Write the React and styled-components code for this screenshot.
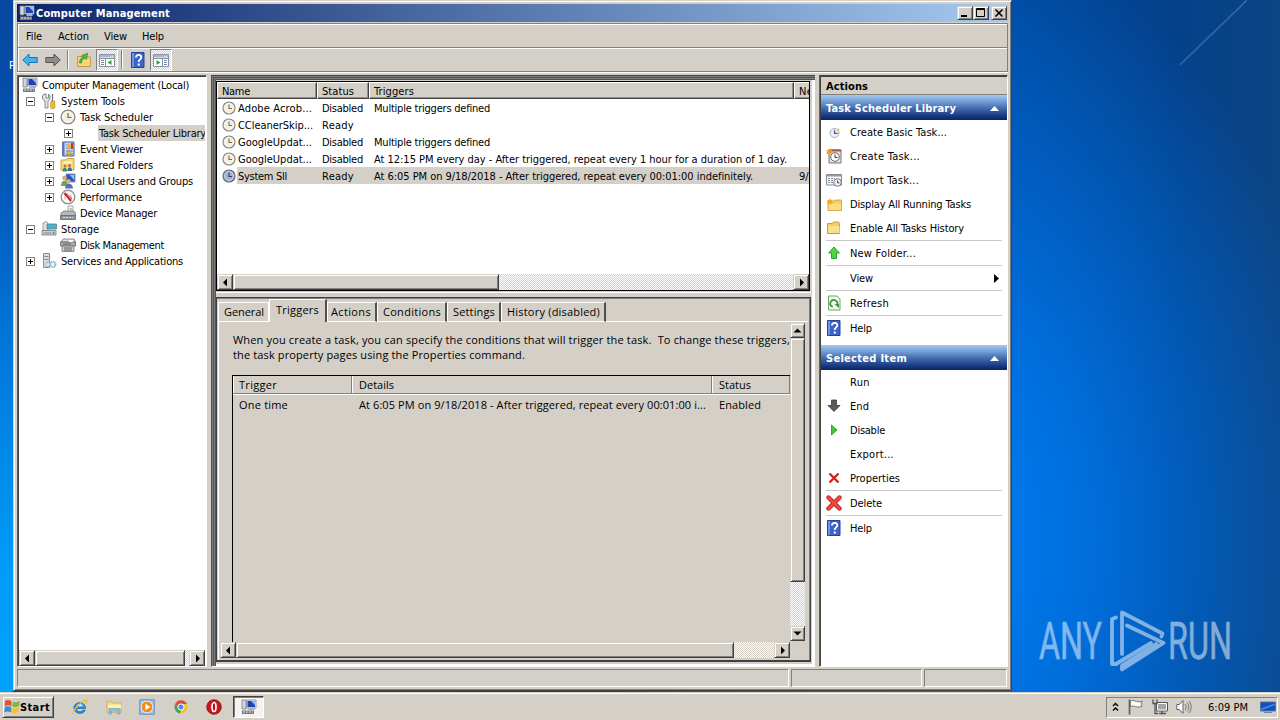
import React, { useLayoutEffect, useRef } from "react";
import styled, { createGlobalStyle, css } from "styled-components";

const face = "#d4d0c8";

const GlobalStyle = createGlobalStyle`
  *, *::before, *::after {
    box-sizing: border-box;
  }
  body {
    margin: 0;
    overflow: hidden;
    color: #000;
    font: 11px "DejaVu Sans Condensed", "DejaVu Sans", sans-serif;
  }
  svg {
    display: block;
    flex: none;
  }
`;

const raised = css`
  border: 1px solid;
  border-color: ${face} #404040 #404040 ${face};
  box-shadow: inset 1px 1px #fff, inset -1px -1px #808080;
  background: ${face};
`;

const dither = css`
  background: repeating-conic-gradient(#fff 0 25%, ${face} 0 50%) 0 0 / 2px 2px;
`;

/* Desktop */

const Desktop = styled.div`
  width: 1280px;
  height: 720px;
  overflow: hidden;
  display: flex;
  flex-direction: column;
  background:
    radial-gradient(ellipse 400px 620px at 940px 540px, #0080f6 0, rgba(0, 116, 230, 0.9) 35%, rgba(0, 80, 175, 0) 100%),
    linear-gradient(90deg, #004a9e 0, #00479c 1010px, #04418a 1180px, #0d4584 1280px);
`;

const Work = styled.div`
  display: flex;
  height: 692px;
`;

const LeftStrip = styled.div`
  width: 13px;
  flex: none;
  padding: 59px 0 0 9px;
  overflow: hidden;
  color: #fff;
  background: linear-gradient(#0848a0 0, #0450b0 20%, #0077da 50%, #009cf8 82%, #00a2fc 100%);
`;

const RightSide = styled.div`
  flex: 1;
  display: flex;
  align-items: flex-end;
  padding: 0 0 20px 26px;
  background: linear-gradient(136deg, transparent 48.5%, rgba(150, 190, 225, 0.35) 50%, transparent 51.5%) 168px 0 /
    67px 65px no-repeat;
`;

const Window = styled.div`
  width: 999px;
  height: 691px;
  flex: none;
  display: flex;
  flex-direction: column;
  padding: 3px 3px 2px 3px;
  background: ${face};
  border: 1px solid;
  border-color: ${face} #404040 #404040 ${face};
  box-shadow: inset 1px 1px #fff, inset -1px -1px #808080;
`;

const TitleBar = styled.div`
  height: 18px;
  display: flex;
  align-items: center;
  padding: 0 1px 0 2px;
  color: #fff;
  font-weight: bold;
  background: linear-gradient(90deg, #0a246a, #a6caf0);
`;

const TitleText = styled.div`
  flex: 1;
  padding-left: 1px;
`;

const CaptionButton = styled.div`
  width: 16px;
  height: 14px;
  margin-left: ${(p) => (p.$gap ? 2 : 0)}px;
  ${raised}
`;

const Bars = styled.div`
  height: 50px;
  margin-top: 1px;
  border-bottom: 1px solid #fff;
`;

const Bar = styled.div`
  height: ${(p) => p.$h}px;
  display: flex;
  align-items: center;
  border: 1px solid #808080;
  margin-bottom: -1px;
  box-shadow: inset 1px 1px #fff;
`;

const MenuItem = styled.div`
  padding: 2px 0 0 ${(p) => p.$left}px;
`;

const ToolButton = styled.div`
  width: ${(p) => (p.$pressed ? 22 : 23)}px;
  height: 22px;
  display: flex;
  align-items: center;
  justify-content: center;
  ${(p) =>
    p.$pressed &&
    css`
      margin-left: 1px;
      border: 1px solid;
      border-color: #808080 #fff #fff #808080;
      ${dither}
    `}
`;

const ToolSeparator = styled.div`
  width: 2px;
  height: 19px;
  margin: 0 3px;
  border-left: 1px solid #808080;
  border-right: 1px solid #fff;
`;

const Panes = styled.div`
  display: flex;
  height: 593px;
  margin-top: 2px;
`;

const Sunken = styled.div`
  border: 1px solid;
  border-color: #606060 #fff #fff #606060;
  box-shadow: inset 1px 1px #404040;
  background: #fff;
  padding: 1px 0 0 1px;
`;

/* Tree */

const TreePane = styled(Sunken)`
  width: 190px;
  height: 592px;
  padding-right: 1px;
  display: flex;
  flex-direction: column;
  overflow: hidden;
`;

const TreeBody = styled.div`
  flex: 1;
`;

const TreeRow = styled.div`
  height: 16px;
  display: flex;
  align-items: center;
  white-space: nowrap;
  overflow: hidden;
  padding-left: ${(p) => p.$left}px;
`;

const Expander = styled.div`
  width: 9px;
  height: 9px;
  margin-right: 6px;
  flex: none;
  border: 1px solid ${(p) => (p.$state ? "#808080" : "transparent")};
  background:
    linear-gradient(#000, #000) center / ${(p) => (p.$state ? "5px 1px" : "0 0")} no-repeat,
    linear-gradient(#000, #000) center / ${(p) => (p.$state === "+" ? "1px 5px" : "0 0")} no-repeat;
`;

const TreeLabel = styled.div`
  height: 16px;
  line-height: 17px;
  flex: ${(p) => (p.$selected ? "1" : "none")};
  margin-left: 3px;
  padding-left: 1px;
  background: ${(p) => (p.$selected ? face : "none")};
`;

const IconSlot = styled.div`
  width: 16px;
  height: 16px;
  flex: none;
`;

/* Scroll bars */

const ScrollBar = styled.div`
  display: flex;
  flex: none;
  flex-direction: ${(p) => (p.$vertical ? "column" : "row")};
  ${(p) => (p.$vertical ? "width: 15px;" : "height: 16px;")}
  ${dither}
`;

const ScrollButton = styled.div`
  width: ${(p) => (p.$vertical ? 15 : 16)}px;
  height: ${(p) => (p.$vertical ? 15 : 16)}px;
  flex: none;
  display: flex;
  align-items: center;
  justify-content: center;
  ${raised}
`;

const Thumb = styled.div`
  flex: 0 0 ${(p) => p.$size}px;
  ${raised}
`;

const Track = styled.div`
  flex: 1;
`;

/* Middle */

const MiddlePane = styled.div`
  width: 604px;
  height: 592px;
  margin-left: 4px;
  padding: 5px 4px 0 4px;
  border: 1px solid;
  border-color: #404040 ${face} #fff #505050;
  border-right: 0;
  box-shadow: inset 1px 1px #808080, inset 2px 2px #505050, inset 3px 3px #808080, inset 4px 4px #505050,
    inset -1px 0 #fff, inset -3px 0 #fff, inset 0 -2px #fff;
  background: ${face};
`;

const TaskList = styled.div`
  width: 594px;
  height: 210px;
  display: flex;
  flex-direction: column;
  overflow: hidden;
  border: 1px solid #000;
  background: #fff;
`;

const Row = styled.div`
  height: 17px;
  display: flex;
  flex: none;
  white-space: nowrap;
  line-height: 17px;
  background: ${(p) => (p.$selected ? `linear-gradient(90deg, #fff 20px, ${face} 20px)` : "none")};
`;

const Cell = styled.div`
  width: ${(p) => p.$w}px;
  flex: none;
  display: flex;
  align-items: center;
  overflow: hidden;
  padding-top: 1px;
  padding-left: ${(p) => (p.$icon ? 4 : 5)}px;
`;

const ListIcon = styled.div`
  width: 17px;
  padding-left: 1px;
  margin-top: -1px;
`;

const HeaderCell = styled(Cell)`
  padding-left: 4px;
  background: ${face};
  border: 1px solid;
  border-color: #fff #404040 #404040 #fff;
  box-shadow: inset -1px -1px #909090;
`;

const Details = styled.div`
  width: 595px;
  height: 365px;
  margin-top: 6px;
  padding: 1px 2px 0 1px;
  border: solid #404040;
  border-width: 1px 1px 2px 1px;
  box-shadow: inset 0 1px #808080, inset -1px 0 #808080, 0 -4px ${face}, 0 -5px #fff;
  font-family: "Open Sans", "Noto Sans", sans-serif;
`;

const Tabs = styled.div`
  height: 23px;
  display: flex;
  align-items: flex-end;
`;

const Tab = styled.div`
  width: ${(p) => p.$w}px;
  height: ${(p) => (p.$active ? 23 : 20)}px;
  padding-left: ${(p) => p.$pad}px;
  padding-bottom: ${(p) => (p.$active ? 3 : 1)}px;
  display: flex;
  align-items: center;
  border: solid #fff;
  border-width: 1px 1px ${(p) => (p.$active ? 0 : 1)}px 1px;
  border-right: ${(p) => (p.$flat ? "1px solid #fff" : "2px solid #505050")};
`;

const TabPage = styled.div`
  height: 338px;
  border-left: 1px solid #fff;
  padding-left: 1px;
  display: flex;
`;

const TabRule = styled.div`
  flex: 1;
  height: 1px;
  background: #fff;
`;

const PageColumn = styled.div`
  width: 570px;
  height: 336px;
  display: flex;
  flex-direction: column;
`;

const PageBody = styled.div`
  height: 320px;
  overflow: hidden;
  padding: 10px 0 0 13px;
  white-space: pre;
`;

const Paragraph = styled.div`
  height: 15px;
  line-height: 15px;
`;

const TriggerTable = styled.div`
  width: 558px;
  height: 290px;
  margin: 13px 0 0 -1px;
  border: 1px solid #000;
  border-right: 0;
`;

const TriggerRow = styled.div`
  display: flex;
  height: ${(p) => (p.$head ? 18 : 21)}px;
  border-bottom: ${(p) => (p.$head ? "1px solid #808080" : "0")};
  box-shadow: ${(p) => (p.$head ? "0 1px #fff" : "none")};
`;

const TriggerCell = styled.div`
  width: ${(p) => p.$w}px;
  padding-left: ${(p) => p.$pad || 6}px;
  display: flex;
  align-items: center;
  border-right: ${(p) => (p.$head ? "1px solid #808080" : "0")};
  box-shadow: ${(p) => (p.$head ? "inset 1px 0 #fff" : "none")};
`;

const VerticalSlot = styled.div`
  display: flex;
  height: 318px;
  margin-top: 1px;
`;

/* Actions */

const ActionsPane = styled(Sunken)`
  width: 189px;
  height: 592px;
  margin-left: 4px;
  border-top-color: #404040;
`;

const PaneTitle = styled.div`
  height: 18px;
  padding: 1px 0 0 5px;
  font-weight: bold;
  line-height: 17px;
  background: ${face};
  border-bottom: 1px solid #808080;
`;

const SectionTitle = styled.div`
  height: 25px;
  margin-top: ${(p) => p.$gap || 0}px;
  padding: 1px 8px 0 5px;
  display: flex;
  align-items: center;
  justify-content: space-between;
  color: #fff;
  font-weight: bold;
  background: linear-gradient(#a6caf0 0, #7ba5da 22%, #4871b2 50%, #16387f 85%, #0a246a 100%);
`;

const ActionRow = styled.div`
  height: ${(p) => (p.$rule ? 25 : 24)}px;
  margin: 0 5px 0 5px;
  display: flex;
  align-items: center;
  border-bottom: ${(p) => (p.$rule ? "1px solid #c8c8c8" : "0")};
`;

const ActionLabel = styled.div`
  flex: 1;
  padding-left: 8px;
`;

/* Status bar and task bar */

const StatusBar = styled.div`
  display: flex;
  gap: 2px;
  height: 18px;
  margin: 1px 1px 0 0;
`;

const StatusCell = styled.div`
  flex: ${(p) => (p.$w ? `0 0 ${p.$w}px` : "1")};
  border: 1px solid;
  border-color: #808080 #fff #fff #808080;
`;

const TaskBar = styled.div`
  height: 28px;
  display: flex;
  align-items: center;
  padding: 2px 2px 0 2px;
  background: ${face};
  box-shadow: inset 0 1px ${face}, inset 0 2px #fff;
`;

const StartButton = styled.div`
  width: 52px;
  height: 22px;
  display: flex;
  align-items: center;
  padding-left: 1px;
  font-weight: bold;
  ${raised}
`;

const QuickLaunch = styled.div`
  display: flex;
  gap: 17.5px;
  padding: 0 11px 0 18px;
`;

const ActiveTask = styled.div`
  width: 31px;
  height: 22px;
  display: flex;
  align-items: center;
  justify-content: center;
  border: 1px solid;
  border-color: #404040 #fff #fff #404040;
  box-shadow: inset 1px 1px #808080;
  background: #f4f3f0;
`;

const Tray = styled.div`
  width: 172px;
  height: 21px;
  margin-left: auto;
  padding: 0 1px 0 4px;
  display: flex;
  align-items: center;
  gap: 8px;
  border: 1px solid;
  border-color: #808080 #fff #fff #808080;
`;

const Clock = styled.div`
  flex: 1;
  padding-left: 8px;
  white-space: nowrap;
`;

const TextSpan = styled.span`
  display: inline-block;
  white-space: pre;
`;

// Spreads the letters of a caption over w pixels
const Text = ({ w, children }) => {
  const ref = useRef(null);

  useLayoutEffect(() => {
    const el = ref.current;
    el.style.letterSpacing = "0px";
    const natural = el.getBoundingClientRect().width;
    el.style.letterSpacing = `${(w - natural) / children.length}px`;
  }, [w, children]);

  return <TextSpan ref={ref}>{children}</TextSpan>;
};

/* Icons */

const clockFace = (rim, fill, hands) => (
  <>
    <circle cx="8" cy="8" r="6.900" fill={fill} stroke={rim} strokeWidth="1.300" />
    <circle cx="8" cy="8" r="5" fill="none" stroke="#fff" strokeOpacity=".6" strokeWidth=".8" />
    <path d="M8 4v4.500h3.500" fill="none" stroke={hands} strokeWidth="1.200" />
  </>
);

const folder = (
  <>
    <path d="M1.500 13.500V3.500h5l1-1.500h5l1 1.500v10z" fill="#f3ce62" stroke="#c9983a" />
    <path d="M2 6h11.500v7H2z" fill="#fbe08a" />
  </>
);

const pc = (
  <>
    <path d="M1 1h4v9H1z" fill="#d4d6da" stroke="#777c88" strokeWidth=".8" />
    <path d="M5.500 1h9.500v8H5.500z" fill="#dfe7f2" stroke="#7d8899" strokeWidth=".8" />
    <path d="M6.500 2h7.500v6H6.500z" fill="#1e3fb4" />
    <path d="M10 2h4v4.500z" fill="#8fb0f4" />
    <path d="M8 9h5l1 2H7z" fill="#a9adb5" />
    <path d="M1 11.500h12v3.500H1z" fill="#777b82" />
    <path d="M2 13h10" stroke="#e4e4e4" strokeDasharray="2 1" />
  </>
);

const help = (
  <>
    <path d="M1.500.5h12.500v15H1.500z" fill="#3d63c8" stroke="#24439c" />
    <path d="M2 1h2v14H2z" fill="#7294e4" />
    <path d="M6 5.500C6 2 11.500 2 11.300 5.200 11.200 7.500 8.700 7.300 8.700 10" fill="none" stroke="#fff" strokeWidth="1.900" />
    <path d="M7.700 11.500h2.100v2.100H7.700z" fill="#fff" />
  </>
);

const consoleWindow = (flip) => (
  <>
    <path d="M.5 2.500h15v12H.5z" fill="#fff" stroke="#8a93a4" />
    <path d="M1 3h14v2.500H1z" fill="#a9b6cc" />
    <path d="M11 4.200h3" stroke="#fff" strokeDasharray="1 1" />
    <path d={flip ? "M9.500 6v8M1 6.500h14" : "M6.500 6v8M1 6.500h14"} stroke="#8a93a4" />
    <path
      d={flip ? "M11 8.500h3M11 10.500h3M11 12.500h3" : "M2 8.500h3M2 10.500h3M2 12.500h3"}
      stroke="#7186a8"
    />
    <path d={flip ? "M3.500 8l4 2.500-4 2.500z" : "M12.500 8l-4 2.500 4 2.500z"} fill="#2eaa35" />
  </>
);

const drawings = {
  pc,
  clock: clockFace("#858585", "#f3efe2", "#806a3a"),
  clockBlue: clockFace("#5f6884", "#a3aecb", "#333e60"),
  folder,
  help,
  tools: (
    <>
      <path d="M3 1L1.500 3v3L4 8v7h3V8l2-2V3L7.500 1v4H5V1z" fill="#e3e5e8" stroke="#7b7f86" strokeWidth=".9" />
      <path d="M11.500 1v7" stroke="#777" strokeWidth="1.300" />
      <path d="M10 8h3.500l.5 6-1 1.500h-2.500l-1-1.500z" fill="#f4c21c" stroke="#b48412" strokeWidth=".7" />
    </>
  ),
  event: (
    <>
      <path d="M2.500 1h11.500v14H2.500z" fill="#c9d6f2" stroke="#3d57a4" />
      <path d="M2 1h2.500v14H2z" fill="#5d78bc" />
      <path d="M6 4h7M6 7h7M6 10h7M6 13h7" stroke="#7087c4" />
      <circle cx="9" cy="4.500" r="2" fill="#f2b23a" />
      <path d="M6.500 13.500L8.500 9l3.500 4.500z" fill="#f7c51d" stroke="#a57a0c" strokeWidth=".6" />
      <path d="M11 2h2v6h-2z" fill="#c43a2c" />
    </>
  ),
  shared: (
    <>
      <path d="M1 13V3h5l1-1.500h7V13z" fill="#f8dc7c" stroke="#d0a546" />
      <path d="M4 5.500h8" stroke="#fff3b8" strokeWidth="2" />
      <circle cx="5" cy="9" r="1.500" fill="#b9743c" />
      <circle cx="9.500" cy="8.500" r="1.500" fill="#b9743c" />
      <path d="M2.500 14.500c0-5 4.500-5 4.500 0z" fill="#3b8c57" />
      <path d="M7.500 14c0-5 4.500-5 4.500 0z" fill="#3c65b4" />
    </>
  ),
  users: (
    <>
      <path d="M6 1h9v8H6z" fill="#2b55c4" stroke="#8d9ab2" />
      <path d="M10 2h4v5z" fill="#9cc0f8" />
      <circle cx="4.500" cy="5" r="2.300" fill="#d8a86c" />
      <path d="M1 13c0-7 7-7 7 0z" fill="#6fa15a" />
      <circle cx="8.500" cy="8.500" r="2.300" fill="#e2b47c" />
      <path d="M5 15.500c0-6.500 8-6.500 8 0z" fill="#5c70b8" />
    </>
  ),
  perf: (
    <>
      <circle cx="8" cy="8" r="6.800" fill="#fff" stroke="#969696" strokeWidth="1.500" />
      <path d="M5 4.500v6M11 5.500v6" stroke="#d8a0a0" />
      <path d="M4.500 4l6.500 8" stroke="#cc2020" strokeWidth="2" />
      <path d="M7 4.500l5 5.500" stroke="#dd4848" />
    </>
  ),
  device: (
    <>
      <path d="M8 1h5v8H8z" fill="#f2f2f2" stroke="#999" strokeWidth=".8" />
      <path d="M1 8l3-2h10l1.500 2v3H1z" fill="#b4b8bc" stroke="#75797e" strokeWidth=".8" />
      <path d="M.5 10.500h15v4H.5z" fill="#8d9296" stroke="#65696d" strokeWidth=".8" />
      <path d="M3 12.500h10" stroke="#e2e2e2" strokeDasharray="2 1" />
      <path d="M10 3l1.500 2" stroke="#52a055" />
    </>
  ),
  storage: (
    <>
      <path d="M2 2l3-1.500 2 1.500v8H2z" fill="#dfe2e4" stroke="#888e94" strokeWidth=".8" />
      <path d="M6 3h9.500v5H6z" fill="#45b3dc" stroke="#727a82" strokeWidth=".8" />
      <path d="M1 9.500h14v4.500H1z" fill="#c9cccf" stroke="#767b81" strokeWidth=".8" />
      <path d="M3 12h7" stroke="#888" />
      <circle cx="12.500" cy="12" r="1" fill="#34aa48" />
    </>
  ),
  disk: (
    <>
      <path d="M3 2h11l1.500 3H1z" fill="#dedede" stroke="#777" strokeWidth=".8" />
      <path d="M.5 5h15v4H.5z" fill="#acacac" stroke="#666" strokeWidth=".8" />
      <path d="M2 9h12v5.500H2z" fill="#c9c9c9" stroke="#777" strokeWidth=".8" />
      <path d="M3 7h8M4 11h8M4 13h8" stroke="#666" />
      <path d="M9 3h4v2H9z" fill="#fff" />
    </>
  ),
  services: (
    <>
      <path d="M2.500.5h6v14h-6z" fill="#d9dde2" stroke="#7b8087" strokeWidth=".9" />
      <path d="M3.500 3.500h4M3.500 6.500h4" stroke="#888" />
      <circle cx="7" cy="11.500" r="2.300" fill="#dce8f2" stroke="#8fb0c8" strokeDasharray="1.200 .6" strokeWidth="1.400" />
      <circle cx="11.800" cy="11.500" r="2.800" fill="#eaf2f8" stroke="#7ba4c4" strokeDasharray="1.200 .6" strokeWidth="1.600" />
    </>
  ),
  back: (
    <path d="M.8 8L7 2v3.500h8.200v5H7V14z" fill="#42b4ee" stroke="#1d72b4" />
  ),
  forward: (
    <path d="M15.200 8L9 2v3.500H.8v5H9V14z" fill="#8c8c8c" stroke="#555" />
  ),
  up: (
    <>
      <path d="M1.500 14.500v-10h4l1-1.500h4l1 2h3v9.500z" fill="#f4d67c" stroke="#c49a42" />
      <path d="M3.500 11c0-4 1.500-5 3.500-5.500L5.500 4l6-3-1 6.500L9 6.200C7 7 5.500 8 5.500 11z" fill="#58b53b" stroke="#25832b" strokeWidth=".6" />
    </>
  ),
  consoleLeft: consoleWindow(false),
  consoleRight: consoleWindow(true),
  basic: (
    <>
      <circle cx="8.500" cy="9" r="4.500" fill="#eef1f8" stroke="#a5abb8" />
      <path d="M8.500 6v3.300h3" fill="none" stroke="#42578c" strokeWidth="1.200" />
      <path d="M12 3.500l.7 1.700 1.700.5-1.600.8-.8 1.500-.9-1.800z" fill="#f2bd3c" />
    </>
  ),
  create: (
    <>
      <path d="M3 2h12v13H3z" fill="#e9e3df" stroke="#7d6f6c" />
      <path d="M3 1.500h12v2H3z" fill="#a4564e" />
      <circle cx="9" cy="9" r="4.300" fill="#fff" stroke="#61666e" />
      <path d="M9 6.500v3h2.500" fill="none" stroke="#333" />
      <path d="M3 0l1 2.200 2.500-.8L5.400 3.600l1.800 1.600-2.600.2L4 8 2.600 5.700 0 6l1.500-2.200L0 2l2.400.2z" fill="#f49a2c" />
    </>
  ),
  import: (
    <>
      <path d="M.5 2.500h15v10.500H.5z" fill="#f8f8f8" stroke="#8b8b8b" />
      <path d="M1 3h14v1.500H1z" fill="#9a9a9a" />
      <path d="M2 6.500h7M2 8.500h7M2 10.500h7" stroke="#7c8ba4" strokeDasharray="2 1" />
      <circle cx="11.500" cy="10.500" r="3.800" fill="#f0f0f0" stroke="#777" />
      <path d="M11.500 8.500v2.300h2" fill="none" stroke="#444" />
    </>
  ),
  running: (
    <>
      <path d="M2 14.500V5h6l1-1h6.500v10.500z" fill="#f6d066" stroke="#cd9a38" strokeWidth=".8" />
      <path d="M3 8h12v5.800H3z" fill="#fbdf84" />
      <path d="M3.500 2l1 2 2.200-.5L5.800 5.400l1.500 1.500-2.200.2-.8 2-1.200-1.900-2.200.2 1.200-1.800L1 4l2 .1z" fill="#f7a718" />
    </>
  ),
  green: (
    <path d="M8 2L13.500 8H10.500v5.500h-5V8H2.500z" fill="#4ad83e" stroke="#29962a" strokeWidth=".9" />
  ),
  refresh: (
    <>
      <path d="M2.500 1h8.500l3 3v11H2.500z" fill="#eef8ec" stroke="#68a868" />
      <path d="M7 11.500H5.800A3.600 3.600 0 1 1 11.300 9.500" fill="none" stroke="#3c963f" strokeWidth="1.700" />
      <path d="M8.500 9h4.500v4z" fill="#3c963f" />
    </>
  ),
  end: (
    <path d="M5.500 2h5v5.500H14l-6 6-6-6h3.500z" fill="#5a5a5a" stroke="#3c3c3c" strokeWidth=".8" />
  ),
  play: <path d="M5.500 3l5.500 5-5.500 5z" fill="#42c83a" stroke="#1f9226" strokeWidth=".8" />,
  cross: <path d="M3.500 3.500l9 9M12.500 3.500l-9 9" stroke="#d8201c" strokeWidth="2.400" />,
  bigCross: (
    <>
      <path d="M2.500 2.500l11 11M13.500 2.500l-11 11" stroke="#b41a1a" strokeWidth="4.400" strokeLinecap="round" />
      <path d="M2.500 2.500l11 11M13.500 2.500l-11 11" stroke="#ee4a40" strokeWidth="2.800" strokeLinecap="round" />
    </>
  ),
  flag: (
    <>
      <path d="M1 7.500c2.500-2 4-1.500 6.500-.3v-5C5 1 3.500.5 1 2.200z" fill="#e8542a" />
      <path d="M8.500 7.600c2 1 4 1 6.500-.8l.8-5c-2.500 1.800-4.500 1.800-6.800.8z" fill="#7db93c" />
      <path d="M.8 8.500c2.500-1.700 4-1.400 6.400-.2v5.300c-2.400-1.300-4-1.700-6.900 0z" fill="#3d8bd4" />
      <path d="M8.300 8.700c2.500 1.200 4.200 1 6.700-.6l-.8 5c-2.200 1.500-4 1.700-6.300.7z" fill="#f5be30" />
    </>
  ),
  ie: (
    <>
      <path d="M13.500 9.500h-9c.2 4 5 4 6 1.800h2.700C11.500 16 2 15.500 2 8.800S13.500 1.500 13.500 9.500z" fill="#2f92dc" stroke="#1767b4" strokeWidth=".8" />
      <path d="M4.700 7.300h6C10.400 4.200 5 4.200 4.700 7.300z" fill="#eaf6ff" />
      <path d="M1.500 14.800C-1 13 10 1.500 14 1.200c1.500.2.8 2.500-.2 3.800" fill="none" stroke="#efbd2f" strokeWidth="1.300" />
    </>
  ),
  explorer: (
    <>
      <path d="M1 13.500V2.500h5l1 1.500h8v9.500z" fill="#f5d673" stroke="#d5ab4d" strokeWidth=".7" />
      <path d="M2 5.500h13v4H2z" fill="#fdf0b4" />
      <path d="M3 15V9.500h11V15h-2.500v-3H5.500v3z" fill="#86c3ea" stroke="#5a9cc8" strokeWidth=".6" />
    </>
  ),
  player: (
    <>
      <path d="M.8.800h14.400v14.400H.8z" fill="#9fcaf0" stroke="#528cc8" />
      <circle cx="8" cy="8" r="5.800" fill="#f58a1d" stroke="#fff" strokeWidth=".7" />
      <path d="M6.300 4.700l5 3.300-5 3.300z" fill="#fff" />
    </>
  ),
  chrome: (
    <>
      <circle cx="8" cy="8" r="6.500" fill="#f5c42c" />
      <path d="M2.300 4.800A6.500 6.500 0 0 1 13.900 5H8L5.300 9.600z" fill="#df4b3c" />
      <path d="M2.300 4.800l3 5 2.700 1.500-1.100 3.100A6.500 6.500 0 0 1 2.300 4.800z" fill="#38a559" />
      <circle cx="8" cy="8" r="3.100" fill="#4a8af0" stroke="#fff" />
    </>
  ),
  opera: (
    <>
      <circle cx="8" cy="8" r="7.300" fill="#c8161d" stroke="#8e1015" strokeWidth=".8" />
      <ellipse cx="8" cy="8" rx="2" ry="4.500" fill="#a81218" stroke="#fff" strokeWidth="1.700" />
    </>
  ),
  trayFlag: (
    <>
      <path d="M1.500.5v15" stroke="#666" strokeWidth="1.800" />
      <path d="M2.500 2c4-1.800 4.500 2 12 .4-2 1.800-1.700 3.600-.5 5-6 2-7.500-1.700-11.500.2z" fill="#fff" stroke="#777" />
    </>
  ),
  network: (
    <>
      <path d="M4.500 3.500h11v8.500h-11z" fill="#a5a5a5" stroke="#555" />
      <path d="M5.500 4.500h9v6.500h-9z" fill="none" stroke="#fff" />
      <path d="M7 14.500h7M10 12v2" stroke="#555" strokeWidth="1.500" />
      <path d="M1 .5v4h4v-4M3 5v9.500h3" fill="none" stroke="#555" strokeWidth="1.300" />
    </>
  ),
  sound: (
    <>
      <path d="M.8 5.500h2.700l3.500-4v13l-3.500-4H.8z" fill="#fff" stroke="#666" />
      <path d="M9 5c1.500 2 1.500 4 0 6M11 3.500c2.500 3 2.500 6 0 9M13 2c3 4 3 8 0 12" fill="none" stroke="#777" />
    </>
  ),
  desktop: (
    <>
      <path d="M.5 3h15v9H.5z" fill="#174fb8" stroke="#5476a8" />
      <path d="M1 9.500L15 4.500V6L1 11.500z" fill="#3b8af0" />
      <path d="M4 13.500h8" stroke="#78869b" />
    </>
  ),
};

const Icon = ({ name, size = 16 }) => (
  <svg width={size} height={size} viewBox="0 0 16 16">
    {drawings[name]}
  </svg>
);

const arrows = {
  left: "M6 .5v8l-4-4z",
  right: "M3 .5v8l4-4z",
  up: "M.5 6.500h8l-4-4z",
  down: "M.5 2.500h8l-4 4z",
};

const Arrow = ({ dir }) => (
  <svg width="9" height="9">
    <path d={arrows[dir]} />
  </svg>
);

const Scroll = ({ vertical, thumb }) => (
  <ScrollBar $vertical={vertical}>
    <ScrollButton $vertical={vertical}>
      <Arrow dir={vertical ? "up" : "left"} />
    </ScrollButton>
    <Thumb $size={thumb} />
    <Track />
    <ScrollButton $vertical={vertical}>
      <Arrow dir={vertical ? "down" : "right"} />
    </ScrollButton>
  </ScrollBar>
);

const tree = [
  { label: "System Tools", w: 64, left: 7, state: "-", icon: "tools" },
  { label: "Task Scheduler", w: 73, left: 26, state: "-", icon: "clock" },
  { label: "Task Scheduler Library", w: 107, left: 45, state: "+", selected: true },
  { label: "Event Viewer", w: 63, left: 26, state: "+", icon: "event" },
  { label: "Shared Folders", w: 73, left: 26, state: "+", icon: "shared" },
  { label: "Local Users and Groups", w: 113, left: 26, state: "+", icon: "users" },
  { label: "Performance", w: 62, left: 26, state: "+", icon: "perf" },
  { label: "Device Manager", w: 77, left: 26, icon: "device" },
  { label: "Storage", w: 38, left: 7, state: "-", icon: "storage" },
  { label: "Disk Management", w: 84, left: 26, icon: "disk" },
  { label: "Services and Applications", w: 122, left: 7, state: "+", icon: "services" },
];

const tasks = [
  { name: "Adobe Acrob...", nw: 74, status: "Disabled", sw: 41, trigger: "Multiple triggers defined", tw: 116 },
  { name: "CCleanerSkip...", nw: 75, status: "Ready", sw: 32, trigger: "", tw: 0 },
  { name: "GoogleUpdat...", nw: 74, status: "Disabled", sw: 41, trigger: "Multiple triggers defined", tw: 116 },
  {
    name: "GoogleUpdat...",
    nw: 74,
    status: "Disabled",
    sw: 41,
    trigger: "At 12:15 PM every day - After triggered, repeat every 1 hour for a duration of 1 day.",
    tw: 413,
  },
  {
    name: "System Sll",
    nw: 49,
    status: "Ready",
    sw: 32,
    trigger: "At 6:05 PM on 9/18/2018 - After triggered, repeat every 00:01:00 indefinitely.",
    tw: 379,
    next: "9/18",
    selected: true,
  },
];

const tabs = [
  { label: "General", w: 51, text: 40, pad: 5, flat: true },
  { label: "Triggers", w: 58, text: 43, pad: 6, active: true },
  { label: "Actions", w: 50, text: 40, pad: 3 },
  { label: "Conditions", w: 70, text: 58, pad: 5 },
  { label: "Settings", w: 54, text: 42, pad: 5 },
  { label: "History (disabled)", w: 105, text: 93, pad: 5 },
];

const libraryActions = [
  { label: "Create Basic Task...", w: 97, icon: "basic" },
  { label: "Create Task...", w: 70, icon: "create" },
  { label: "Import Task...", w: 69, icon: "import" },
  { label: "Display All Running Tasks", w: 121, icon: "running" },
  { label: "Enable All Tasks History", w: 114, icon: "folder", rule: true },
  { label: "New Folder...", w: 66, icon: "green", rule: true },
  { label: "View", w: 23, rule: true, submenu: true },
  { label: "Refresh", w: 39, icon: "refresh", rule: true },
  { label: "Help", w: 22, icon: "help" },
];

const itemActions = [
  { label: "Run", w: 20 },
  { label: "End", w: 19, icon: "end" },
  { label: "Disable", w: 35, icon: "play" },
  { label: "Export...", w: 44 },
  { label: "Properties", w: 50, icon: "cross", rule: true },
  { label: "Delete", w: 32, icon: "bigCross", rule: true },
  { label: "Help", w: 22, icon: "help" },
];

const Section = ({ title, w, gap, items }) => (
  <>
    <SectionTitle $gap={gap}>
      <Text w={w}>{title}</Text>
      <svg width="9" height="5">
        <path d="M0 5L4.500 0 9 5z" fill="#fff" />
      </svg>
    </SectionTitle>
    {items.map((item) => (
      <ActionRow key={item.label} $rule={item.rule}>
        <IconSlot>{item.icon && <Icon name={item.icon} />}</IconSlot>
        <ActionLabel>
          <Text w={item.w}>{item.label}</Text>
        </ActionLabel>
        {item.submenu && (
          <svg width="9" height="9">
            <path d="M1 0v9l5-4.500z" />
          </svg>
        )}
      </ActionRow>
    ))}
  </>
);

const Tree = () => (
  <TreePane>
    <TreeBody>
      <TreeRow $left={3}>
        <Icon name="pc" />
        <TreeLabel>
          <Text w={147}>Computer Management (Local)</Text>
        </TreeLabel>
      </TreeRow>
      {tree.map((node) => (
        <TreeRow key={node.label} $left={node.left}>
          <Expander $state={node.state} />
          <IconSlot>{node.icon && <Icon name={node.icon} />}</IconSlot>
          <TreeLabel $selected={node.selected}>
            <Text w={node.w}>{node.label}</Text>
          </TreeLabel>
        </TreeRow>
      ))}
    </TreeBody>
    <Scroll thumb={150} />
  </TreePane>
);

const Tasks = () => (
  <TaskList>
    <Row>
      <HeaderCell $w={100}><Text w={28}>Name</Text></HeaderCell>
      <HeaderCell $w={52}><Text w={32}>Status</Text></HeaderCell>
      <HeaderCell $w={425}><Text w={40}>Triggers</Text></HeaderCell>
      <HeaderCell $w={60}><Text w={24}>Next</Text></HeaderCell>
    </Row>
    {tasks.map((task, i) => (
      <Row key={i} $selected={task.selected}>
        <Cell $w={100} $icon>
          <ListIcon>
            <Icon name={task.selected ? "clockBlue" : "clock"} size={14} />
          </ListIcon>
          <Text w={task.nw}>{task.name}</Text>
        </Cell>
        <Cell $w={52}><Text w={task.sw}>{task.status}</Text></Cell>
        <Cell $w={425}>{task.trigger && <Text w={task.tw}>{task.trigger}</Text>}</Cell>
        <Cell $w={60}>{task.next && <Text w={22}>{task.next}</Text>}</Cell>
      </Row>
    ))}
    <Track />
    <Scroll thumb={266} />
  </TaskList>
);

const DetailsPane = () => (
  <Details>
    <Tabs>
      {tabs.map((tab) => (
        <Tab key={tab.label} $w={tab.w} $pad={tab.pad} $active={tab.active} $flat={tab.flat}>
          <Text w={tab.text}>{tab.label}</Text>
        </Tab>
      ))}
      <TabRule />
    </Tabs>
    <TabPage>
      <PageColumn>
        <PageBody>
          <Paragraph>
            <Text w={557}>
              {"When you create a task, you can specify the conditions that will trigger the task.  To change these triggers,"}
            </Text>
          </Paragraph>
          <Paragraph>
            <Text w={292}>the task property pages using the Properties command.</Text>
          </Paragraph>
          <TriggerTable>
            <TriggerRow $head>
              <TriggerCell $head $w={119}><Text w={38}>Trigger</Text></TriggerCell>
              <TriggerCell $head $pad={7} $w={360}><Text w={35}>Details</Text></TriggerCell>
              <TriggerCell $head $pad={7} $w={78}><Text w={32}>Status</Text></TriggerCell>
            </TriggerRow>
            <TriggerRow>
              <TriggerCell $w={119}><Text w={49}>One time</Text></TriggerCell>
              <TriggerCell $pad={7} $w={360}>
                <Text w={347}>At 6:05 PM on 9/18/2018 - After triggered, repeat every 00:01:00 i...</Text>
              </TriggerCell>
              <TriggerCell $pad={7} $w={78}><Text w={42}>Enabled</Text></TriggerCell>
            </TriggerRow>
          </TriggerTable>
        </PageBody>
        <Scroll thumb={498} />
      </PageColumn>
      <VerticalSlot>
        <Scroll vertical thumb={244} />
      </VerticalSlot>
    </TabPage>
  </Details>
);

const Watermark = () => (
  <svg width="194" height="66" fill="none" stroke="#fff" opacity=".5">
    <g fill="#fff" strokeWidth=".5" fontFamily="Roboto, sans-serif" fontSize="51.500">
      <text x="1" y="53" textLength="63" lengthAdjust="spacingAndGlyphs">ANY</text>
      <text x="130" y="53" textLength="64" lengthAdjust="spacingAndGlyphs">RUN</text>
    </g>
    <g strokeWidth="3.800" strokeLinecap="round" strokeLinejoin="round">
      <path d="M84 48V6.500L124.500 27.500l-1 3" />
      <path d="M89 19.500L125.500 37 84 63.500v-4L118 38" />
      <path d="M78 11.500l-4 1.500v45h4l35-21" />
    </g>
  </svg>
);

const App = () => (
  <Desktop>
    <GlobalStyle />
    <Work>
      <LeftStrip>P</LeftStrip>
      <Window>
        <TitleBar>
          <Icon name="pc" />
          <TitleText>
            <Text w={134}>Computer Management</Text>
          </TitleText>
          <CaptionButton>
            <svg width="14" height="12"><path d="M3 8h6v2H3z" /></svg>
          </CaptionButton>
          <CaptionButton>
            <svg width="14" height="12">
              <path d="M2.500 1.500h8v8h-8z M2 2.500h9" fill="none" stroke="#000" />
            </svg>
          </CaptionButton>
          <CaptionButton $gap>
            <svg width="14" height="12">
              <path d="M3.500 2.500l7 7M10.500 2.500l-7 7" stroke="#000" strokeWidth="1.600" />
            </svg>
          </CaptionButton>
        </TitleBar>
        <Bars>
          <Bar $h={25}>
            <MenuItem $left={8}><Text w={16}>File</Text></MenuItem>
            <MenuItem $left={16}><Text w={31}>Action</Text></MenuItem>
            <MenuItem $left={15}><Text w={23}>View</Text></MenuItem>
            <MenuItem $left={15}><Text w={22}>Help</Text></MenuItem>
          </Bar>
          <Bar $h={25}>
            <ToolButton><Icon name="back" /></ToolButton>
            <ToolButton><Icon name="forward" /></ToolButton>
            <ToolSeparator />
            <ToolButton><Icon name="up" /></ToolButton>
            <ToolButton $pressed><Icon name="consoleLeft" /></ToolButton>
            <ToolSeparator />
            <ToolButton><Icon name="help" /></ToolButton>
            <ToolButton $pressed><Icon name="consoleRight" /></ToolButton>
          </Bar>
        </Bars>
        <Panes>
          <Tree />
          <MiddlePane>
            <Tasks />
            <DetailsPane />
          </MiddlePane>
          <ActionsPane>
            <PaneTitle><Text w={42}>Actions</Text></PaneTitle>
            <Section title="Task Scheduler Library" w={130} items={libraryActions} />
            <Section title="Selected Item" w={81} gap={5} items={itemActions} />
          </ActionsPane>
        </Panes>
        <StatusBar>
          <StatusCell />
          <StatusCell $w={131} />
          <StatusCell $w={83} />
        </StatusBar>
      </Window>
      <RightSide>
        <Watermark />
      </RightSide>
    </Work>
    <TaskBar>
      <StartButton>
        <Icon name="flag" />
        <Text w={30}>Start</Text>
      </StartButton>
      <QuickLaunch>
        <Icon name="ie" />
        <Icon name="explorer" />
        <Icon name="player" />
        <Icon name="chrome" />
        <Icon name="opera" />
      </QuickLaunch>
      <ActiveTask>
        <Icon name="pc" />
      </ActiveTask>
      <Tray>
        <svg width="9" height="10" fill="none" stroke="#000" strokeWidth="1.400">
          <path d="M2 4l2.500-2.500L7 4M2 8.500L4.500 6 7 8.500" />
        </svg>
        <Icon name="trayFlag" />
        <Icon name="network" />
        <Icon name="sound" />
        <Clock><Text w={40}>6:09 PM</Text></Clock>
        <Icon name="desktop" />
      </Tray>
    </TaskBar>
  </Desktop>
);

export default App;
